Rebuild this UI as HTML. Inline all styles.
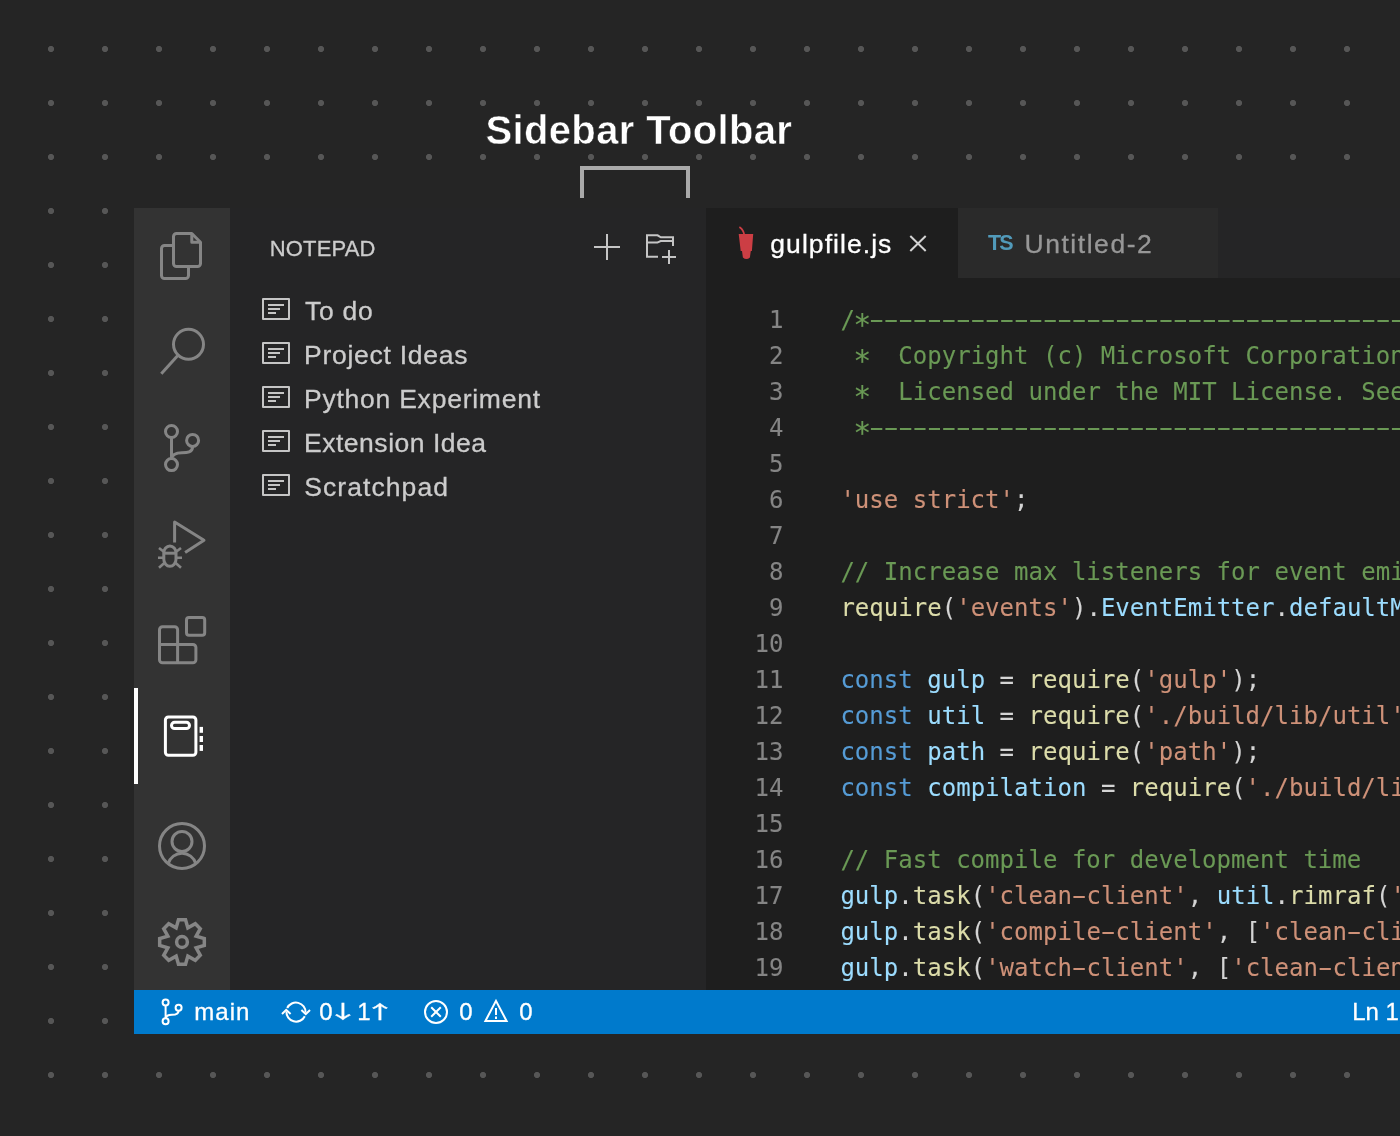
<!DOCTYPE html>
<html lang="en">
<head>
<meta charset="utf-8">
<title>Sidebar Toolbar</title>
<style>
  html, body { margin: 0; padding: 0; }
  body {
    width: 1400px; height: 1136px; overflow: hidden; position: relative;
    background: #252525;
    font-family: "Liberation Sans", sans-serif;
    -webkit-font-smoothing: antialiased;
  }
  #root { position: absolute; left: 0; top: 0; width: 1400px; height: 1136px; overflow: hidden; will-change: transform; }
  /* dotted canvas grid */
  #dots {
    position: absolute; left: 24px; top: 22px; width: 1350px; height: 1080px;
    background-image: radial-gradient(circle at 27px 27px, #565656 0, #565656 2.7px, rgba(86,86,86,0) 3.5px);
    background-size: 54px 54px;
  }
  #title {
    position: absolute; left: 485.5px; top: 107px; line-height: 46px;
    font-size: 40px; font-weight: 700; color: #ffffff; letter-spacing: 0.35px; white-space: nowrap; -webkit-text-stroke: 0.5px #252525;
  }
  #bracket {
    position: absolute; left: 580px; top: 166px; width: 102px; height: 28px;
    border: 4px solid #a9a9a9; border-bottom: none;
  }
  /* window */
  #activity { position: absolute; left: 134px; top: 208px; width: 96px; height: 782px; background: #333333; }
  #activebar { position: absolute; left: 134px; top: 688px; width: 4px; height: 96px; background: #ffffff; }
  #sidebar { position: absolute; left: 230px; top: 208px; width: 476px; height: 782px; background: #252526; }
  #editor { position: absolute; left: 706px; top: 208px; width: 694px; height: 782px; background: #1e1e1e; overflow: hidden; }
  #tabstrip { position: absolute; left: 0; top: 0; width: 694px; height: 70px; background: #252526; }
  #tab1 { position: absolute; left: 0; top: 0; width: 252px; height: 70px; background: #1e1e1e; }
  #tab2 { position: absolute; left: 252px; top: 0; width: 260px; height: 70px; background: #2a2a2a; }
  #status { position: absolute; left: 134px; top: 990px; width: 1266px; height: 44px; background: #007acc; overflow: hidden; }

  .ui { position: absolute; white-space: nowrap; color: #cccccc; -webkit-text-stroke: 0.3px; }
  #sbtitle { left: 269.8px; top: 235.7px; font-size: 22px; line-height: 26px; letter-spacing: 0.16px; color: #cccccc; }
  .item { left: 305px; font-size: 26.5px; line-height: 32px; letter-spacing: 0.65px; color: #cccccc; }
  .tabtxt { font-size: 26.5px; line-height: 32px; }
  .ar { width: 40px; text-align: center; font-family: "Noto Sans CJK SC", "DejaVu Sans", sans-serif; font-size: 18.5px !important; transform: scaleX(1.7); -webkit-text-stroke: 0.3px !important; }
  .st { position: absolute; top: -0.4px; height: 44px; line-height: 44px; font-size: 24px; color: #ffffff; white-space: nowrap; -webkit-text-stroke: 0.3px; }

  /* code */
  #gutter, #code {
    position: absolute; top: 94.4px; margin: 0;
    font-family: "DejaVu Sans Mono", "Liberation Mono", monospace;
    font-size: 24px; line-height: 36px; white-space: pre; letter-spacing: 0.02px; -webkit-text-stroke: 0.1px;
  }
  #gutter { left: 0; width: 77.5px; text-align: right; color: #858585; }
  #code { left: 134.4px; color: #d4d4d4; }
  .h { text-shadow: -2.6px 0 0 currentColor, 2.6px 0 0 currentColor, -1.3px 0 0 currentColor, 1.3px 0 0 currentColor; position: relative; top: -0.5px; }
  .a { display: inline-block; transform: translateY(4.5px) scale(1.25); }
  .c { color: #6a9955; } .s { color: #ce9178; } .k { color: #569cd6; }
  .v { color: #9cdcfe; } .f { color: #dcdcaa; }
  svg#icons { position: absolute; left: 0; top: 0; }
</style>
</head>
<body>
<div id="root">
<div id="dots"></div>
<div id="title">Sidebar Toolbar</div>
<div id="bracket"></div>

<div id="activity"></div>
<div id="activebar"></div>
<div id="sidebar"></div>

<div class="ui" id="sbtitle">NOTEPAD</div>
<div class="ui item" style="top:295px; letter-spacing:0.7px">To do</div>
<div class="ui item" style="top:339px; left:304px; letter-spacing:0.73px">Project Ideas</div>
<div class="ui item" style="top:383px; left:304px; letter-spacing:0.76px">Python Experiment</div>
<div class="ui item" style="top:427px; left:304px; letter-spacing:0.52px">Extension Idea</div>
<div class="ui item" style="top:471px; left:304.2px; letter-spacing:1.08px">Scratchpad</div>

<div id="editor">
  <div id="tabstrip">
    <div id="tab1"></div>
    <div id="tab2"></div>
  </div>
  <div class="ui tabtxt" style="left:64.3px; top:19.6px; color:#ffffff; letter-spacing:1.06px">gulpfile.js</div>
  <div class="ui" style="left:282px; top:22.3px; font-size:21.5px; line-height:26px; font-weight:700; color:#519aba; letter-spacing:-1.9px; -webkit-text-stroke:0">TS</div>
  <div class="ui tabtxt" style="left:318.5px; top:19.6px; color:#979797; letter-spacing:1.54px">Untitled-2</div>
<pre id="gutter">1
2
3
4
5
6
7
8
9
10
11
12
13
14
15
16
17
18
19</pre>
<pre id="code"><span class="c">/<span class="a">*</span><span class="h">---------------------------------------------------------------------------------------------</span></span>
<span class="c"> <span class="a">*</span>  Copyright (c) Microsoft Corporation. All rights reserved.</span>
<span class="c"> <span class="a">*</span>  Licensed under the MIT License. See License.txt in the project root for license information.</span>
<span class="c"> <span class="a">*</span><span class="h">--------------------------------------------------------------------------------------------</span><span class="a">*</span>/</span>

<span class="s">'use strict'</span>;

<span class="c">// Increase max listeners for event emitters</span>
<span class="f">require</span>(<span class="s">'events'</span>).<span class="v">EventEmitter</span>.<span class="v">defaultMaxListeners</span> = 100;

<span class="k">const</span> <span class="v">gulp</span> = <span class="f">require</span>(<span class="s">'gulp'</span>);
<span class="k">const</span> <span class="v">util</span> = <span class="f">require</span>(<span class="s">'./build/lib/util'</span>);
<span class="k">const</span> <span class="v">path</span> = <span class="f">require</span>(<span class="s">'path'</span>);
<span class="k">const</span> <span class="v">compilation</span> = <span class="f">require</span>(<span class="s">'./build/lib/compilation'</span>);

<span class="c">// Fast compile for development time</span>
<span class="v">gulp</span>.<span class="f">task</span>(<span class="s">'clean<span class="h">-</span>client'</span>, <span class="v">util</span>.<span class="f">rimraf</span>(<span class="s">'out'</span>));
<span class="v">gulp</span>.<span class="f">task</span>(<span class="s">'compile<span class="h">-</span>client'</span>, [<span class="s">'clean<span class="h">-</span>client'</span>], <span class="v">compilation</span>.<span class="f">compileTask</span>(<span class="s">'out'</span>, <span class="k">false</span>));
<span class="v">gulp</span>.<span class="f">task</span>(<span class="s">'watch<span class="h">-</span>client'</span>, [<span class="s">'clean<span class="h">-</span>client'</span>], <span class="v">compilation</span>.<span class="f">watchTask</span>(<span class="s">'out'</span>, <span class="k">false</span>));</pre>
</div>

<div id="status">
  <div class="st" style="left:60.3px; letter-spacing:1px">main</div>
  <div class="st" style="left:185.2px">0</div>
  <div class="st ar" style="left:189.2px; top:-2px">↓</div>
  <div class="st" style="left:223.3px">1</div>
  <div class="st ar" style="left:226.3px; top:-1px">↑</div>
  <div class="st" style="left:325.2px">0</div>
  <div class="st" style="left:385.2px">0</div>
  <div class="st" style="left:1218.2px">Ln 17, Col 1</div>
</div>

<!--ICONS-START-->
<svg id="icons" width="1400" height="1136" viewBox="0 0 1400 1136" fill="none" stroke-linecap="butt" stroke-linejoin="round">
<g stroke="#858585" stroke-width="3">
<path d="M176.5 233.5 H191.8 L200.5 242.2 V263.5 a3 3 0 0 1 -3 3 H176.5 a3 3 0 0 1 -3 -3 V236.5 a3 3 0 0 1 3 -3 Z"/>
<path d="M191.8 233.5 V242.2 H200.5"/>
<path d="M173 245.5 H164.5 a3 3 0 0 0 -3 3 V275.5 a3 3 0 0 0 3 3 H185.5 a3 3 0 0 0 3 -3 V267"/>
<circle cx="188.5" cy="344.3" r="15"/>
<path d="M178 355.2 L161.3 373.8" stroke-linecap="butt"/>
<circle cx="171.5" cy="431.5" r="6"/><circle cx="171.5" cy="464.6" r="6"/><circle cx="192.6" cy="440.4" r="6"/>
<path d="M171.5 437.5 V458.6"/>
<path d="M192.6 446.4 C192.6 452.6 187 452.8 182 452.8 C176.5 452.8 172 454.5 171.5 459"/>
<path d="M174.6 542.4 V522 L204 540.3 L185.1 552.5" stroke-linejoin="round"/>
<rect x="163.8" y="546" width="12.2" height="20.3" rx="6.1" ry="7"/>
<path d="M164 553.2 H176" />
<path d="M158 557.8 H164 M176 557.8 H182 M159 548 L164.2 552 M181 548 L175.8 552 M159 567.8 L164.6 562.8 M181 567.8 L175.4 562.8" stroke-width="2.6"/>
<rect x="186.5" y="617.5" width="18.2" height="17.8" rx="2.5"/>
<path d="M159.5 629.8 a3 3 0 0 1 3 -3 H174.6 a3 3 0 0 1 3 3 V644.5 H192.9 a3 3 0 0 1 3 3 V659.7 a3 3 0 0 1 -3 3 H162.5 a3 3 0 0 1 -3 -3 Z"/>
<path d="M159.5 644.5 H177.6 V662.7"/>
<circle cx="182" cy="846" r="22.5"/><circle cx="182" cy="841.5" r="10"/>
<path d="M168.2 863.6 A14.4 14.4 0 0 1 195.8 863.6"/>
<path d="M176.14 927.86 L178.46 919.68 L185.54 919.68 L187.86 927.86 L187.86 927.86 L195.28 923.72 L200.28 928.72 L196.14 936.14 L196.14 936.14 L204.32 938.46 L204.32 945.54 L196.14 947.86 L196.14 947.86 L200.28 955.28 L195.28 960.28 L187.86 956.14 L187.86 956.14 L185.54 964.32 L178.46 964.32 L176.14 956.14 L176.14 956.14 L168.72 960.28 L163.72 955.28 L167.86 947.86 L167.86 947.86 L159.68 945.54 L159.68 938.46 L167.86 936.14 L167.86 936.14 L163.72 928.72 L168.72 923.72 L176.14 927.86 Z" stroke-linejoin="miter" stroke-width="3.5"/>
<circle cx="182" cy="942" r="5.4" stroke-width="3.5"/>
</g>
<g stroke="#ffffff" stroke-width="3">
<rect x="165.4" y="716.9" width="30.5" height="38.4" rx="3"/>
<rect x="171.5" y="722.3" width="18" height="6.2" rx="3.1"/>
</g>
<g fill="#ffffff"><rect x="199.6" y="726.9" width="3.4" height="5.9"/><rect x="199.6" y="736" width="3.4" height="6"/><rect x="199.6" y="745" width="3.4" height="5.9"/></g>
<rect x="263" y="299" width="26" height="20" stroke="#c5c5c5" stroke-width="2"/>
<path d="M268 305 H284 M268 309 H280 M268 313 H276" stroke="#c5c5c5" stroke-width="2"/>
<rect x="263" y="343" width="26" height="20" stroke="#c5c5c5" stroke-width="2"/>
<path d="M268 349 H284 M268 353 H280 M268 357 H276" stroke="#c5c5c5" stroke-width="2"/>
<rect x="263" y="387" width="26" height="20" stroke="#c5c5c5" stroke-width="2"/>
<path d="M268 393 H284 M268 397 H280 M268 401 H276" stroke="#c5c5c5" stroke-width="2"/>
<rect x="263" y="431" width="26" height="20" stroke="#c5c5c5" stroke-width="2"/>
<path d="M268 437 H284 M268 441 H280 M268 445 H276" stroke="#c5c5c5" stroke-width="2"/>
<rect x="263" y="475" width="26" height="20" stroke="#c5c5c5" stroke-width="2"/>
<path d="M268 481 H284 M268 485 H280 M268 489 H276" stroke="#c5c5c5" stroke-width="2"/>
<g stroke="#c5c5c5" stroke-width="2" stroke-linejoin="miter">
<path d="M594 247 H620 M607 234 V260"/>
<path d="M658 256.8 H647 V235.3 H657.6 L660.8 237.3 H673 V246"/>
<path d="M647 242.6 H657.4 L660.6 241 H673"/>
<path d="M662 257 H676 M669 250 V264"/>
</g>
<path d="M910.3 236 L925.7 251 M925.7 236 L910.3 251" stroke="#d4d4d4" stroke-width="2"/>
<path d="M738.7 234 H753.2 L751.9 251 H750.8 L749.9 257.6 Q746.4 260.6 742.9 257.6 L742 251 H740.7 Z" fill="#cc3e44"/>
<path d="M740 227.4 Q743.6 230 744.3 235" stroke="#cc3e44" stroke-width="1.8" stroke-linecap="round"/>
<g stroke="#ffffff" stroke-width="2">
<circle cx="165.6" cy="1002.6" r="3"/><circle cx="165.6" cy="1021.2" r="3"/><circle cx="178.6" cy="1007.7" r="3"/>
<path d="M165.6 1005.6 V1018.2"/>
<path d="M178.6 1010.7 C178.6 1014.6 175 1014.8 172 1014.8 C168.6 1014.8 166 1015.8 165.6 1018.4"/>
<path d="M287.2 1008 A9.7 9.7 0 0 1 305.6 1012.6"/>
<path d="M301.4 1010 L305.8 1014.2 L310 1010" stroke-linejoin="miter"/>
<path d="M304.8 1016.2 A9.7 9.7 0 0 1 286.4 1011.4"/>
<path d="M282 1014 L286.2 1009.8 L290.6 1014" stroke-linejoin="miter"/>
<circle cx="436" cy="1012" r="11"/><path d="M431.2 1007.2 L440.8 1016.8 M440.8 1007.2 L431.2 1016.8"/>
<path d="M496 1000.9 L506.6 1021 H485.4 Z" stroke-linejoin="miter"/><path d="M496 1008 V1015 M496 1016.6 V1019"/>
</g>
</svg>
<!--ICONS-END-->
</div>
</body>
</html>
